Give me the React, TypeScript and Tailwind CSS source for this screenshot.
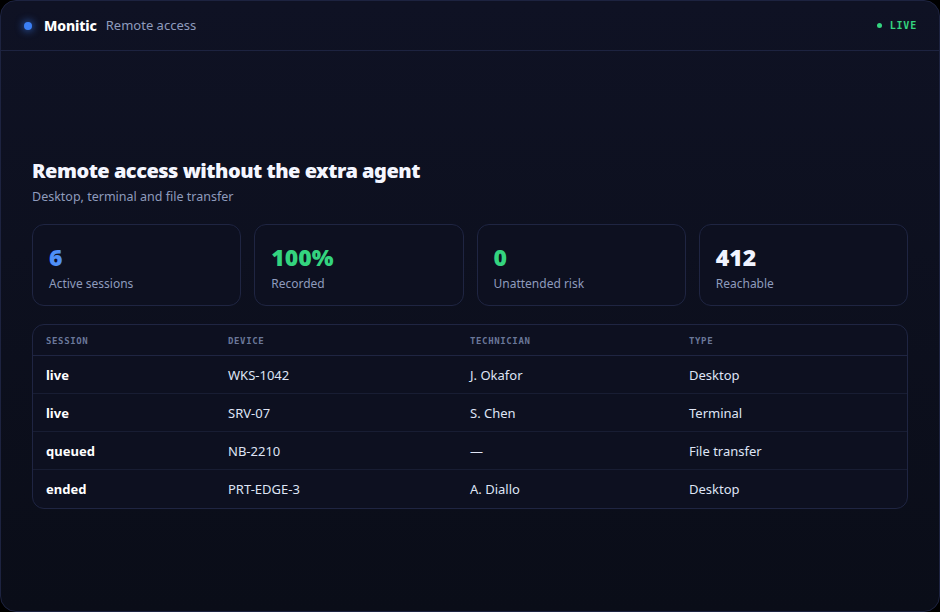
import React from "react";

type Stat = {
  value: string;
  label: string;
  color: string;
};

type Session = {
  status: string;
  device: string;
  technician: string;
  type: string;
};

const stats: Stat[] = [
  { value: "6", label: "Active sessions", color: "text-[#4f8ff7]" },
  { value: "100%", label: "Recorded", color: "text-[#34d47f]" },
  { value: "0", label: "Unattended risk", color: "text-[#34d47f]" },
  { value: "412", label: "Reachable", color: "text-[#f1f4ff]" },
];

const sessions: Session[] = [
  { status: "live", device: "WKS-1042", technician: "J. Okafor", type: "Desktop" },
  { status: "live", device: "SRV-07", technician: "S. Chen", type: "Terminal" },
  { status: "queued", device: "NB-2210", technician: "—", type: "File transfer" },
  { status: "ended", device: "PRT-EDGE-3", technician: "A. Diallo", type: "Desktop" },
];

const cols = "grid grid-cols-[182px_242px_219px_1fr]";

function App() {
  return (
    <div className="h-[612px] w-[940px] bg-black font-['Noto_Sans',sans-serif]">
      <div className="flex h-full flex-col overflow-hidden rounded-2xl border border-[#1d2340] bg-gradient-to-b from-[#0f1224] to-[#0a0d18]">
        <header className="flex h-[50px] shrink-0 items-center justify-between border-b border-[#1d2340] pl-[23px] pr-[22px]">
          <div className="flex items-center">
            <span className="h-2 w-2 rounded-full bg-[#3b7ff5] shadow-[0_0_8px_#3b7ff5]" />
            <span className="ml-3 text-[14px] font-extrabold tracking-[-0.01em] text-white">Monitic</span>
            <span className="ml-[9px] text-[13px] text-[#8e9bbd]">Remote access</span>
          </div>
          <div className="flex items-center gap-2 font-['DejaVu_Sans_Mono',monospace] text-[10px] font-bold tracking-[0.08em] text-[#34d47f]">
            <span className="h-[5px] w-[5px] rounded-full bg-[#34d47f]" />
            LIVE
          </div>
        </header>

        <main className="flex flex-1 flex-col justify-center px-[31px] pt-1">
          <h1 className="text-[20px] font-black leading-7 tracking-tight text-[#f4f6ff]">
            Remote access without the extra agent
          </h1>
          <p className="mt-[3px] text-[12.5px] text-[#8e9bbd]">Desktop, terminal and file transfer</p>

          <div className="mt-[18px] grid grid-cols-4 gap-[13px]">
            {stats.map((s) => (
              <div key={s.label} className="h-[82px] rounded-xl border border-[#1f2542] bg-[#0d1020] px-4 pt-[16px]">
                <div className={`text-[23px] font-black leading-8 ${s.color}`}>{s.value}</div>
                <div className="mt-[2px] text-[12px] text-[#8e9bbd]">{s.label}</div>
              </div>
            ))}
          </div>

          <div className="mt-[18px] overflow-hidden rounded-xl border border-[#1f2542] bg-[#0d1020]">
            <div className={`${cols} h-[31px] items-center border-b border-[#1f2542] pt-[3px] font-['DejaVu_Sans_Mono',monospace] text-[9px] font-bold tracking-[0.07em] text-[#6a7799]`}>
              <div className="px-[13px]">SESSION</div>
              <div className="px-[13px]">DEVICE</div>
              <div className="px-[13px]">TECHNICIAN</div>
              <div className="px-[13px]">TYPE</div>
            </div>
            {sessions.map((r, i) => (
              <div
                key={i}
                className={`${cols} h-[38px] items-center pt-[1px] text-[13px] text-[#dfe4f5] ${
                  i < sessions.length - 1 ? "border-b border-[#181d33]" : ""
                }`}
              >
                <div className="px-[13px] font-bold text-white">{r.status}</div>
                <div className="px-[13px]">{r.device}</div>
                <div className="px-[13px]">{r.technician}</div>
                <div className="px-[13px]">{r.type}</div>
              </div>
            ))}
          </div>
        </main>
      </div>
    </div>
  );
}

export default App;
